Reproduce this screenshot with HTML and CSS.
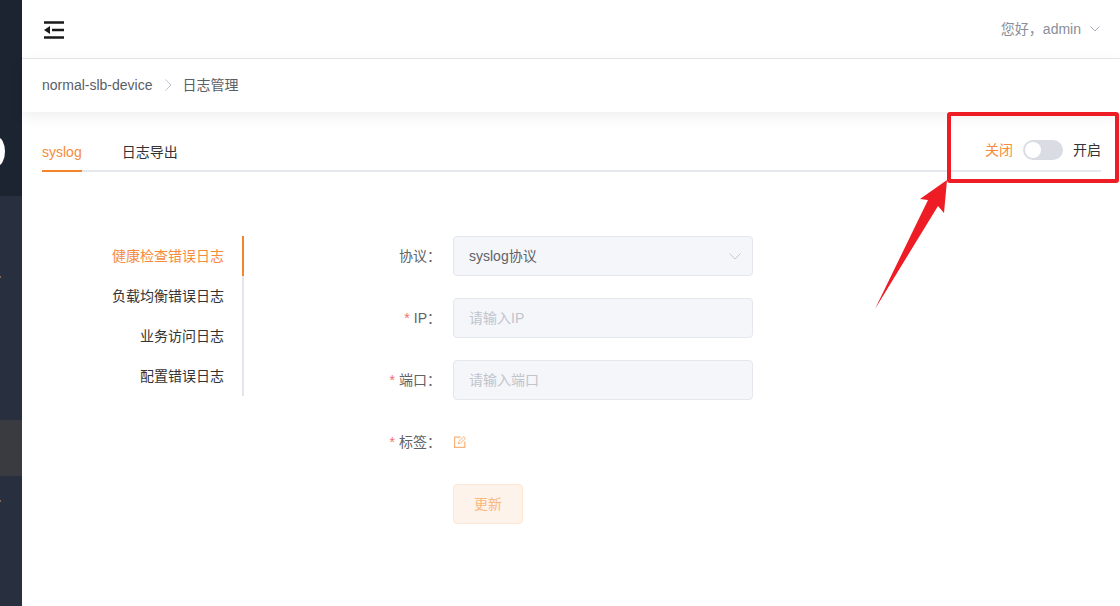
FILE: index.html
```html
<!DOCTYPE html>
<html lang="zh-CN">
<head>
<meta charset="utf-8">
<title>日志管理</title>
<link rel="stylesheet" href="styles.css">
</head>
<body>
<div class="app">
  <aside class="sidebar">
    <div class="side-top"><span class="side-logo"></span></div>
    <div class="side-body">
      <span class="side-dot side-dot-a"></span>
      <div class="side-active"></div>
      <span class="side-dot side-dot-b"></span>
    </div>
  </aside>
  <main class="main">
    <header class="topbar">
      <svg class="menu-icon" width="20" height="18" viewBox="0 0 20 18"><path d="M0 .2h20v2.600H0zM0 15.200h20v2.600H0zM8 7.700h12v2.600H8z" fill="#1a1a1a"/><path d="M0 9l6-4v8z" fill="#1a1a1a"/></svg>
      <div class="user"><span>您好，admin</span>
        <svg class="user-caret" width="10" height="6" viewBox="0 0 10 6"><path d="M.5.5L5 5 9.500.5" fill="none" stroke="#a9b0bd"/></svg>
      </div>
    </header>
    <nav class="crumbs">
      <span class="crumb">normal-slb-device</span>
      <svg class="crumb-sep" width="7" height="12" viewBox="0 0 7 12"><path d="M.5.5L6 6 .5 11.500" fill="none" stroke="#c0c4cc"/></svg>
      <span class="crumb">日志管理</span>
    </nav>
    <section class="content">
      <div class="tabs">
        <span class="tab tab-active">syslog</span>
        <span class="tab">日志导出</span>
        <div class="switch-row">
          <span class="switch-off">关闭</span>
          <span class="switch"><span class="switch-knob"></span></span>
          <span class="switch-on">开启</span>
        </div>
      </div>
      <div class="panel">
        <ul class="anchors">
          <li class="anchor anchor-active">健康检查错误日志</li>
          <li class="anchor">负载均衡错误日志</li>
          <li class="anchor">业务访问日志</li>
          <li class="anchor">配置错误日志</li>
        </ul>
        <form class="form">
          <div class="row"><label class="label">协议：</label>
            <div class="field field-select"><span>syslog协议</span>
              <svg width="12" height="7" viewBox="0 0 12 7"><path d="M.5.5L6 6 11.500.5" fill="none" stroke="#c4c8d0"/></svg>
            </div>
          </div>
          <div class="row"><label class="label"><i>*</i>IP：</label><div class="field field-ph">请输入IP</div></div>
          <div class="row"><label class="label"><i>*</i>端口：</label><div class="field field-ph">请输入端口</div></div>
          <div class="row"><label class="label"><i>*</i>标签：</label>
            <svg class="edit" width="12" height="12" viewBox="0 0 12 12"><path d="M6.500 1.200H.6v10.200h10.200V5.500" fill="none" stroke="#f9b27a" stroke-width="1.200"/><path d="M4.300 7.800l.4-2.100L9.800.7l1.600 1.600-5 5z" fill="none" stroke="#f9b27a"/></svg>
          </div>
          <div class="row row-btn"><button class="btn" type="button">更新</button></div>
        </form>
      </div>
    </section>
  </main>
</div>
<svg class="annotation" width="1120" height="606" viewBox="0 0 1120 606">
  <rect x="949" y="114" width="168" height="67" rx="1" fill="none" stroke="#ee1c25" stroke-width="4"/>
  <path d="M875 309L928 200 920 199 947 180 944 213 938 206z" fill="#ee1c25"/>
</svg>
</body>
</html>
```
FILE: styles.css
```css
* { box-sizing: border-box; }
html, body { margin: 0; height: 100%; }
body { font-family: "Liberation Sans", "Noto Sans CJK SC", sans-serif; font-size: 14px; color: #333; background: #fff; overflow: hidden; }
.app { display: flex; width: 1120px; height: 606px; }
.sidebar { width: 22px; flex: none; display: flex; flex-direction: column; background: #28303f; overflow: hidden; }
.side-top { height: 196px; background: #1c2331; position: relative; }
.side-logo { position: absolute; left: -11px; top: 137px; width: 16px; height: 29px; border-radius: 50%; background: #fff; }
.side-body { flex: 1; position: relative; }
.side-active { position: absolute; left: 0; right: 0; top: 224px; height: 56px; background: #3a3b40; }
.side-dot { position: absolute; left: 0; width: 1px; height: 2px; background: #8a6a50; }
.side-dot-a { top: 80px; }
.side-dot-b { top: 304px; }
.main { flex: 1; min-width: 0; display: flex; flex-direction: column; }
.topbar { height: 59px; flex: none; border-bottom: 1px solid #e6e7eb; display: flex; align-items: center; justify-content: space-between; padding: 0 20px 0 22px; }
.menu-icon { display: block; margin-top: 2px; }
.user { display: flex; align-items: center; gap: 9px; color: #8a8e99; line-height: 20px; }
.crumbs { height: 53px; flex: none; display: flex; align-items: center; padding: 0 0 2px 20px; color: #5a5e66; box-shadow: 0 4px 14px rgba(0, 0, 0, .07); position: relative; }
.crumb { line-height: 20px; display: block; }
.crumb-sep { margin: 0 10px 0 13px; }
.content { flex: 1; padding: 0 19px 0 20px; }
.tabs { height: 60px; display: flex; align-items: flex-end; gap: 40px; border-bottom: 2px solid #e6e8ef; position: relative; color: #333; }
.tab { height: 38px; margin-bottom: -2px; border-bottom: 2px solid transparent; padding-top: 8px; line-height: 20px; }
.tab-active { color: #f68b3c; border-bottom-color: #f5842c; }
.switch-row { margin-left: auto; display: flex; align-items: center; gap: 10px; height: 20px; margin-bottom: 10px; line-height: 20px; }
.switch-off { color: #f68b3c; }
.switch-on { color: #333; }
.switch { width: 40px; height: 20px; border-radius: 10px; background: #d9dce3; position: relative; display: block; }
.switch-knob { position: absolute; left: 2px; top: 2px; width: 16px; height: 16px; border-radius: 50%; background: #fff; }
.panel { display: flex; padding-top: 64px; }
.anchors { list-style: none; margin: 0; padding: 0; width: 202px; height: 160px; border-right: 2px solid #e3e6ec; position: relative; flex: none; }
.anchor { height: 40px; line-height: 40px; text-align: right; padding-right: 18px; color: #333; margin-right: -2px; border-right: 2px solid transparent; }
.anchor-active { color: #f68b3c; border-right-color: #f5842c; }
.form { flex: 1; }
.row { display: flex; align-items: center; height: 40px; margin-bottom: 22px; }
.label { width: 197px; margin-right: 12px; text-align: right; color: #606266; line-height: 20px; }
.label i { font-style: normal; color: #f56c6c; margin-right: 4px; }
.field { width: 300px; height: 40px; border: 1px solid #e4e7ed; border-radius: 4px; background: #f5f6fa; padding: 0 15px; line-height: 38px; }
.field-select { display: flex; align-items: center; justify-content: space-between; color: #606266; padding-right: 11px; }
.field-ph { color: #c0c4cc; }
.edit { display: block; margin-left: 1px; }
.row-btn { padding-left: 209px; }
.btn { width: 70px; height: 40px; border: 1px solid #fde6d3; border-radius: 4px; background: #fef3ea; color: #fab77f; font: inherit; padding: 0 0 2px; }
.annotation { position: absolute; left: 0; top: 0; pointer-events: none; }
```
